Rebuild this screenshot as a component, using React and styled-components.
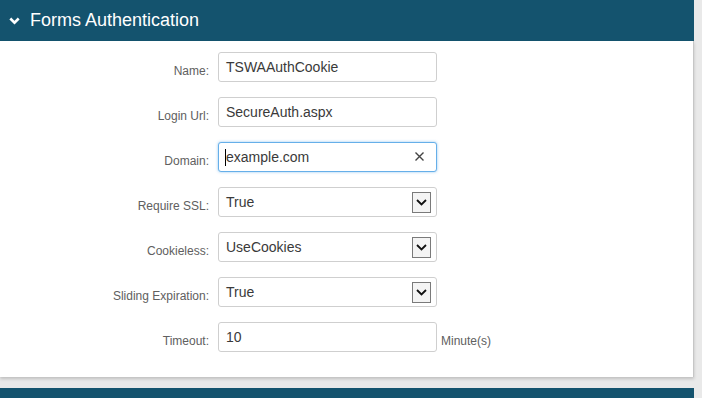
import React from 'react';
import styled, { createGlobalStyle } from 'styled-components';

const GlobalStyle = createGlobalStyle`
  html, body {
    margin: 0;
    padding: 0;
    background: #e9e9e9;
    font-family: "Liberation Sans", Arial, sans-serif;
  }
`;

const Page = styled.div`
  width: 694px;
  display: flex;
  flex-direction: column;
  gap: 11px;
`;

const Section = styled.div`
  display: flex;
  flex-direction: column;
`;

const Header = styled.div`
  height: 41px;
  background: #14536e;
  color: #fff;
  display: flex;
  align-items: center;
  padding-left: 9px;
  gap: 10px;
  box-sizing: border-box;
`;

const Title = styled.span`
  font-size: 18px;
  line-height: 20px;
  padding-bottom: 1px;
`;

const Panel = styled.div`
  background: #fff;
  border-right: 1px solid #c6c6c6;
  box-shadow: 0 2px 3px rgba(0, 0, 0, 0.18);
  padding: 11px 0 25px;
  display: flex;
  flex-direction: column;
  gap: 15px;
`;

const Row = styled.div`
  display: flex;
  align-items: flex-start;
`;

const Label = styled.div`
  width: 209px;
  text-align: right;
  font-size: 12px;
  line-height: 14px;
  margin-top: 12px;
  color: #606060;
`;

const Field = styled.div`
  position: relative;
  margin-left: 9px;
  width: 219px;
  height: 30px;
  box-sizing: border-box;
  border: 1px solid ${p => (p.$focused ? '#66afe9' : '#cfcfcf')};
  border-radius: 3px;
  box-shadow: ${p => (p.$focused ? '0 0 3px rgba(102,175,233,0.7)' : 'none')};
  display: flex;
  align-items: center;
  padding-left: 7px;
  font-size: 14px;
  color: #3a3a3a;
  background: #fff;
`;

const Caret = styled.span`
  width: 1px;
  height: 17px;
  background: #000;
  margin-left: -1px;
`;

const Clear = styled.span`
  position: absolute;
  right: 12px;
  top: 9px;
  width: 9px;
  height: 9px;
  display: flex;
`;

const ArrowBox = styled.span`
  position: absolute;
  right: 5px;
  top: 4px;
  width: 19px;
  height: 21px;
  box-sizing: border-box;
  border: 1px solid #7a7a7a;
  background: #f4f4f4;
  display: flex;
  align-items: center;
  justify-content: center;
`;

const Suffix = styled.span`
  font-size: 12px;
  line-height: 14px;
  margin-top: 12px;
  margin-left: 4px;
  color: #606060;
`;

const Chevron = () => (
  <svg width="11" height="8" viewBox="0 0 11 8">
    <polyline points="1.3,1.5 5.5,5.6 9.7,1.5" fill="none" stroke="#fff" strokeWidth="2.6" />
  </svg>
);

const Arrow = () => (
  <svg width="11" height="7" viewBox="0 0 11 7">
    <polyline points="1,1 5.5,5.5 10,1" fill="none" stroke="#111" strokeWidth="1.8" />
  </svg>
);

const X = () => (
  <svg width="9" height="9" viewBox="0 0 9 9">
    <path d="M0.5 0.5 L8.5 8.5 M8.5 0.5 L0.5 8.5" stroke="#444" strokeWidth="1.4" />
  </svg>
);

const Select = ({ value }) => (
  <Field>
    {value}
    <ArrowBox>
      <Arrow />
    </ArrowBox>
  </Field>
);

export default function App() {
  return (
    <>
      <GlobalStyle />
      <Page>
        <Section>
          <Header>
            <Chevron />
            <Title>Forms Authentication</Title>
          </Header>
          <Panel>
            <Row>
              <Label>Name:</Label>
              <Field>TSWAAuthCookie</Field>
            </Row>
            <Row>
              <Label>Login Url:</Label>
              <Field>SecureAuth.aspx</Field>
            </Row>
            <Row>
              <Label>Domain:</Label>
              <Field $focused>
                <Caret />
                example.com
                <Clear>
                  <X />
                </Clear>
              </Field>
            </Row>
            <Row>
              <Label>Require SSL:</Label>
              <Select value="True" />
            </Row>
            <Row>
              <Label>Cookieless:</Label>
              <Select value="UseCookies" />
            </Row>
            <Row>
              <Label>Sliding Expiration:</Label>
              <Select value="True" />
            </Row>
            <Row>
              <Label>Timeout:</Label>
              <Field>10</Field>
              <Suffix>Minute(s)</Suffix>
            </Row>
          </Panel>
        </Section>
        <Header />
      </Page>
    </>
  );
}
